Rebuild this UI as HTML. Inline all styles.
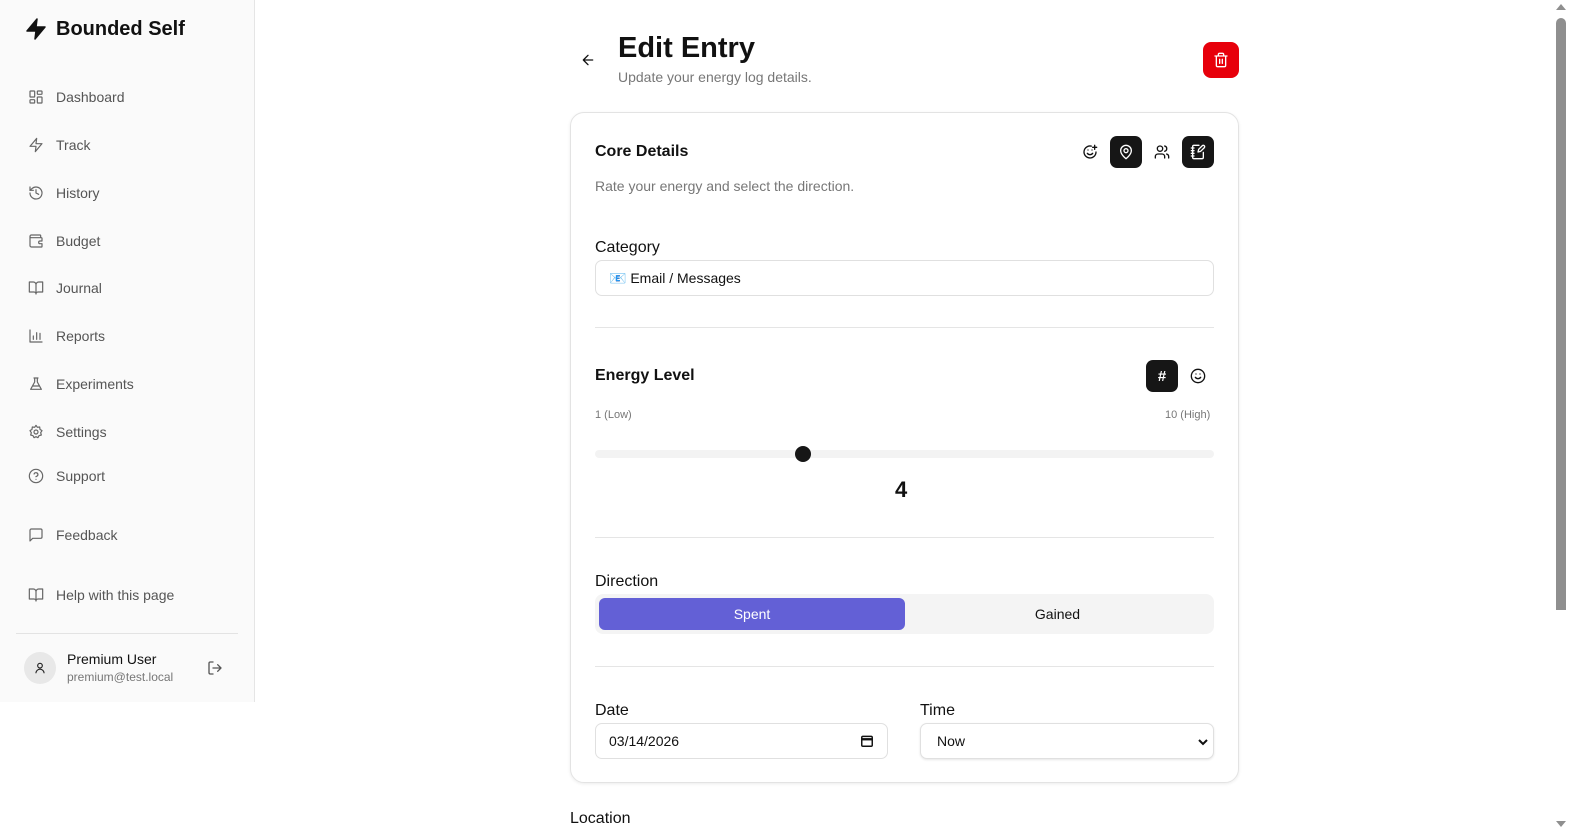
<!DOCTYPE html>
<html><head><meta charset="utf-8"><style>
*{box-sizing:border-box;margin:0;padding:0}
html,body{width:1576px;height:837px;overflow:hidden;background:#fff;font-family:"Liberation Sans",sans-serif;color:#111}
.abs{position:absolute}
.side{position:absolute;left:0;top:0;width:255px;height:702px;background:#fafafa;border-right:1px solid #e5e5e5}
.nav{position:absolute;left:28px;display:flex;align-items:center;font-size:14px;color:#555}
.nav svg{width:16px;height:16px;margin-right:12px;stroke:#666;fill:none;stroke-width:1.8;stroke-linecap:round;stroke-linejoin:round}
.lbl{position:absolute;font-size:16px;color:#111}
.card{position:absolute;left:570px;top:112px;width:669px;height:671px;border:1px solid #e3e3e3;border-radius:14px;box-shadow:0 1px 3px rgba(0,0,0,.08)}
.hr{position:absolute;left:595px;width:619px;height:1px;background:#e5e5e5}
.input{position:absolute;border:1px solid #e0e0e0;border-radius:7px;font-size:14px;display:flex;align-items:center;padding-left:13px;background:#fff}
.ib{position:absolute;width:32px;height:32px;border-radius:7px;display:flex;align-items:center;justify-content:center}
.ib svg{width:16px;height:16px;fill:none;stroke-width:2;stroke-linecap:round;stroke-linejoin:round}
</style></head><body>
<div class="side">
  <div class="abs" style="left:24px;top:17px;display:flex;align-items:center">
    <svg width="24" height="24" viewBox="0 0 24 24"><path d="M13 2 3 14h9l-1 8 10-12h-9z" fill="#111" stroke="#111" stroke-width="1.5" stroke-linejoin="round"/></svg>
    <span style="font-size:20px;font-weight:bold;margin-left:8px">Bounded Self</span>
  </div>
  <div class="nav" style="top:89px"><svg viewBox="0 0 24 24"><rect x="3" y="3" width="7" height="9" rx="1"/><rect x="14" y="3" width="7" height="5" rx="1"/><rect x="14" y="12" width="7" height="9" rx="1"/><rect x="3" y="16" width="7" height="5" rx="1"/></svg>Dashboard</div>
  <div class="nav" style="top:137px"><svg viewBox="0 0 24 24"><path d="M13 2 3 14h9l-1 8 10-12h-9z"/></svg>Track</div>
  <div class="nav" style="top:185px"><svg viewBox="0 0 24 24"><path d="M3 12a9 9 0 1 0 3-6.7L3 8"/><path d="M3 3v5h5M12 7v5l4 2"/></svg>History</div>
  <div class="nav" style="top:233px"><svg viewBox="0 0 24 24"><path d="M19 7V4a1 1 0 0 0-1-1H5a2 2 0 0 0 0 4h15a1 1 0 0 1 1 1v4h-3a2 2 0 0 0 0 4h3v4a1 1 0 0 1-1 1H5a2 2 0 0 1-2-2V5"/></svg>Budget</div>
  <div class="nav" style="top:280px"><svg viewBox="0 0 24 24"><path d="M2 3h6a4 4 0 0 1 4 4v14a3 3 0 0 0-3-3H2zM22 3h-6a4 4 0 0 0-4 4v14a3 3 0 0 1 3-3h7z"/></svg>Journal</div>
  <div class="nav" style="top:328px"><svg viewBox="0 0 24 24"><path d="M3 3v18h18M8 17v-5M13 17V7M18 17v-9"/></svg>Reports</div>
  <div class="nav" style="top:376px"><svg viewBox="0 0 24 24"><path d="M9 3h6M10 3v6L4 20h16L14 9V3M7 15h10"/></svg>Experiments</div>
  <div class="nav" style="top:424px"><svg viewBox="0 0 24 24"><circle cx="12" cy="12" r="3"/><path d="M12 2l2 3 3.5-.5.5 3.5 3 2-2 3 1 3.5-3.5 1-1.5 3-3-1.5-3 1.5-1.5-3-3.5-1 1-3.5-2-3 3-2 .5-3.5L10 5z"/></svg>Settings</div>
  <div class="nav" style="top:468px"><svg viewBox="0 0 24 24"><circle cx="12" cy="12" r="10"/><path d="M9.1 9a3 3 0 0 1 5.8 1c0 2-3 3-3 3M12 17h.01"/></svg>Support</div>
  <div class="nav" style="top:527px"><svg viewBox="0 0 24 24"><path d="M21 15a2 2 0 0 1-2 2H7l-4 4V5a2 2 0 0 1 2-2h14a2 2 0 0 1 2 2z"/></svg>Feedback</div>
  <div class="nav" style="top:587px"><svg viewBox="0 0 24 24"><path d="M2 3h6a4 4 0 0 1 4 4v14a3 3 0 0 0-3-3H2zM22 3h-6a4 4 0 0 0-4 4v14a3 3 0 0 1 3-3h7z"/></svg>Help with this page</div>
  <div class="abs" style="left:16px;top:633px;width:222px;height:1px;background:#e3e3e3"></div>
  <div class="abs" style="left:24px;top:652px;width:32px;height:32px;border-radius:50%;background:#e8e8e8;display:flex;align-items:center;justify-content:center"><svg width="14" height="14" viewBox="0 0 24 24" fill="none" stroke="#222" stroke-width="2"><circle cx="12" cy="8" r="4"/><path d="M5 21a7 7 0 0 1 14 0"/></svg></div>
  <div class="abs" style="left:67px;top:651px;font-size:14px;color:#111">Premium User</div>
  <div class="abs" style="left:67px;top:670px;font-size:12px;color:#777">premium@test.local</div>
  <svg class="abs" style="left:207px;top:660px" width="16" height="16" viewBox="0 0 24 24" fill="none" stroke="#555" stroke-width="2" stroke-linecap="round" stroke-linejoin="round"><path d="M9 21H5a2 2 0 0 1-2-2V5a2 2 0 0 1 2-2h4M16 17l5-5-5-5M21 12H9"/></svg>
</div>

<svg class="abs" style="left:580px;top:52px" width="16" height="16" viewBox="0 0 24 24" fill="none" stroke="#111" stroke-width="2" stroke-linecap="round" stroke-linejoin="round"><path d="M19 12H5M12 19l-7-7 7-7"/></svg>
<div class="abs" style="left:618px;top:32px;font-size:29px;font-weight:bold">Edit Entry</div>
<div class="abs" style="left:618px;top:69px;font-size:14px;color:#777">Update your energy log details.</div>
<div class="abs" style="left:1203px;top:42px;width:36px;height:36px;border-radius:8px;background:#e7000b;display:flex;align-items:center;justify-content:center"><svg width="16" height="16" viewBox="0 0 24 24" fill="none" stroke="#fff" stroke-width="2" stroke-linecap="round"><path d="M3 6h18M19 6v14a2 2 0 0 1-2 2H7a2 2 0 0 1-2-2V6M8 6V4a2 2 0 0 1 2-2h4a2 2 0 0 1 2 2v2M10 11v6M14 11v6"/></svg></div>

<div class="card"></div>
<div class="abs" style="left:595px;top:143px;font-size:16px;font-weight:bold">Core Details</div>
<div class="abs" style="left:595px;top:178px;font-size:14px;color:#777">Rate your energy and select the direction.</div>
<div class="ib" style="left:1074px;top:136px"><svg viewBox="0 0 24 24" stroke="#111"><path d="M21 12a9 9 0 1 1-7-8.8"/><path d="M8 14s1.5 2 4 2 4-2 4-2M9 9h.01M15 9h.01M16 5h6M19 2v6"/></svg></div>
<div class="ib" style="left:1110px;top:136px;background:#161616"><svg viewBox="0 0 24 24" stroke="#fff"><path d="M20 10c0 6-8 12-8 12s-8-6-8-12a8 8 0 0 1 16 0z"/><circle cx="12" cy="10" r="3"/></svg></div>
<div class="ib" style="left:1146px;top:136px"><svg viewBox="0 0 24 24" stroke="#111"><path d="M16 21v-2a4 4 0 0 0-4-4H6a4 4 0 0 0-4 4v2"/><circle cx="9" cy="7" r="4"/><path d="M22 21v-2a4 4 0 0 0-3-3.9M16 3.1a4 4 0 0 1 0 7.8"/></svg></div>
<div class="ib" style="left:1182px;top:136px;background:#161616"><svg viewBox="0 0 24 24" stroke="#fff"><path d="M13.4 2H6a2 2 0 0 0-2 2v16a2 2 0 0 0 2 2h12a2 2 0 0 0 2-2v-7.4M2 6h4M2 10h4M2 14h4M2 18h4M21.4 5.6a2 2 0 0 0-3-3L13 8l-1 4 4-1z"/></svg></div>

<div class="lbl" style="left:595px;top:239px">Category</div>
<div class="input" style="left:595px;top:260px;width:619px;height:36px">📧 Email / Messages</div>
<div class="hr" style="top:327px"></div>

<div class="abs" style="left:595px;top:367px;font-size:16px;font-weight:bold;font-weight:600">Energy Level</div>
<div class="ib" style="left:1146px;top:360px;background:#161616;color:#fff;font-size:15px;font-weight:bold">#</div>
<div class="ib" style="left:1182px;top:360px"><svg viewBox="0 0 24 24" stroke="#111"><circle cx="12" cy="12" r="10"/><path d="M8 14s1.5 2 4 2 4-2 4-2M9 9h.01M15 9h.01"/></svg></div>
<div class="abs" style="left:595px;top:409px;font-size:11px;color:#777">1 (Low)</div>
<div class="abs" style="left:1165px;top:409px;font-size:11px;color:#777">10 (High)</div>
<div class="abs" style="left:595px;top:450px;width:619px;height:8px;border-radius:4px;background:#f3f3f3"></div>
<div class="abs" style="left:795px;top:446px;width:16px;height:16px;border-radius:50%;background:#161616"></div>
<div class="abs" style="left:895px;top:477px;font-size:22px;font-weight:bold">4</div>
<div class="hr" style="top:537px"></div>

<div class="lbl" style="left:595px;top:573px">Direction</div>
<div class="abs" style="left:595px;top:594px;width:619px;height:40px;border-radius:8px;background:#f4f4f4"></div>
<div class="abs" style="left:599px;top:598px;width:306px;height:32px;border-radius:6px;background:#6360d6;color:#fff;font-size:14px;display:flex;align-items:center;justify-content:center">Spent</div>
<div class="abs" style="left:905px;top:598px;width:305px;height:32px;color:#111;font-size:14px;display:flex;align-items:center;justify-content:center">Gained</div>
<div class="hr" style="top:666px"></div>

<div class="lbl" style="left:595px;top:702px">Date</div>
<div class="input" style="left:595px;top:723px;width:293px;height:36px">03/14/2026<svg class="abs" style="left:264px;top:10px" width="14" height="14" viewBox="0 0 24 24" fill="none" stroke="#111" stroke-width="2.5"><rect x="3" y="4" width="18" height="17" rx="2"/><path d="M3 9h18" stroke-width="4"/></svg></div>
<div class="lbl" style="left:920px;top:702px">Time</div>
<div class="input" style="left:920px;top:723px;width:294px;height:36px;padding-left:16px;box-shadow:0 1px 2px rgba(0,0,0,.1)">Now<svg class="abs" style="left:277px;top:13px" width="10" height="10" viewBox="0 0 10 10" fill="none" stroke="#111" stroke-width="2"><path d="M1 3l4 4 4-4"/></svg></div>

<div class="lbl" style="left:570px;top:810px">Location</div>

<div class="abs" style="left:1553px;top:0;width:23px;height:837px;background:#fff"></div>
<div class="abs" style="left:1556px;top:18px;width:10px;height:592px;background:#8f8f8f;border-radius:5px 5px 0 0"></div>
<svg class="abs" style="left:1556px;top:3px" width="10" height="8"><path d="M0 7L5 1 10 7z" fill="#8f8f8f"/></svg>
<svg class="abs" style="left:1556px;top:820px" width="10" height="8"><path d="M0 1L5 7 10 1z" fill="#8f8f8f"/></svg>
</body></html>
